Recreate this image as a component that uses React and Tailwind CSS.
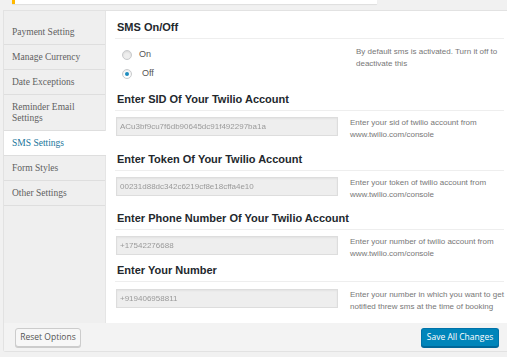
const menu = [
  { label: "Payment Setting" },
  { label: "Manage Currency" },
  { label: "Date Exceptions" },
  { label: "Reminder Email Settings" },
  { label: "SMS Settings", active: true },
  { label: "Form Styles" },
  { label: "Other Settings" },
];

const fields = [
  {
    title: "Enter SID Of Your Twilio Account",
    value: "ACu3bf9cu7f6db90645dc91f492297ba1a",
    help: ["Enter your sid of twilio account from", "www.twilio.com/console"],
    gap: "mt-[9px]",
  },
  {
    title: "Enter Token Of Your Twilio Account",
    value: "00231d88dc342c6219cf8e18cffa4e10",
    help: ["Enter your token of twilio account from", "www.twilio.com/console"],
    gap: "mt-[12px]",
  },
  {
    title: "Enter Phone Number Of Your Twilio Account",
    value: "+17542276688",
    help: ["Enter your number of twilio account from", "www.twilio.com/console"],
    gap: "mt-[11px]",
  },
  {
    title: "Enter Your Number",
    value: "+919406958811",
    help: [
      "Enter your number in which you want to get",
      "notified threw sms at the time of booking",
    ],
    gap: "mt-[4px]",
  },
];

function Heading({ children, className = "" }) {
  return (
    <h3
      className={`border-b border-[#eeeeee] pb-[3px] pl-[2px] text-[11px] font-bold leading-[15px] text-[#23282d] ${className}`}
    >
      {children}
    </h3>
  );
}

function Help({ lines, className = "" }) {
  return (
    <p
      className={`whitespace-nowrap text-[8px] leading-[11.5px] text-[#777777] ${className}`}
    >
      {lines[0]}
      <br />
      {lines[1]}
    </p>
  );
}

function Radio({ checked, label, textGap }) {
  return (
    <label className="flex h-[19px] items-center pl-[7px]">
      <span
        className={`flex h-[10px] w-[10px] items-center justify-center rounded-full border border-[#c8cacc] shadow-[inset_0_1px_2px_rgba(0,0,0,0.1)] ${
          checked ? "bg-white" : "bg-[#eeeeee]"
        }`}
      >
        {checked && <span className="h-[4px] w-[4px] rounded-full bg-[#1e8cbe]" />}
      </span>
      <span className={`${textGap} text-[9px] text-[#555555]`}>{label}</span>
    </label>
  );
}

export default function App() {
  return (
    <div className="h-[357px] w-[507px] overflow-hidden bg-[#f1f1f1] font-['Liberation_Sans',Arial,sans-serif]">
      <div className="ml-[12px] h-[4px] w-[365px] border-l-[3px] border-l-[#ffb900] bg-white shadow-[0_1px_1px_rgba(0,0,0,0.08)]" />

      <div className="ml-[3px] mt-[6px] rounded-bl-[3px] border-b border-l border-t border-[#e2e2e2]">
        <div className="flex">
          <aside className="w-[102px] shrink-0 border-r border-[#e5e5e5] bg-[#efefef] pt-[9px] font-['Liberation_Serif',Georgia,serif]">
            {menu.map((item) => (
              <div
                key={item.label}
                className={`border-b border-[#dedede] pb-[6px] pl-[8px] pr-[10px] pt-[7px] text-[9.5px] leading-[11px] ${
                  item.active
                    ? "-mr-px bg-white text-[#21759b]"
                    : "text-[#5f5f5f]"
                }`}
              >
                {item.label}
              </div>
            ))}
          </aside>

          <main className="flex-1 bg-white pb-[11px] pl-[9px] pr-[4px] pt-[9px]">
            <Heading>SMS On/Off</Heading>
            <div className="mt-[6px] flex">
              <div className="w-[241px]">
                <Radio label="On" textGap="ml-[7px]" />
                <Radio checked label="Off" textGap="ml-[10px]" />
              </div>
              <Help
                className="mt-[1px]"
                lines={["By default sms is activated. Turn it off to", "deactivate this"]}
              />
            </div>

            {fields.map((field, i) => (
              <div key={field.title}>
                <Heading className={field.gap}>{field.title}</Heading>
                <div
                  className={`flex items-start ${
                    i === fields.length - 1 ? "mt-[7px]" : "mt-[6px]"
                  }`}
                >
                  <div className="ml-px flex h-[19px] w-[222px] shrink-0 items-center border border-[#dddddd] bg-[#eeeeee] px-[3px] shadow-[inset_0_1px_2px_rgba(0,0,0,0.05)]">
                    <span className="whitespace-nowrap text-[8px] text-[#9a9a9a] blur-[0.7px]">
                      {field.value}
                    </span>
                  </div>
                  <Help className="ml-[12px]" lines={field.help} />
                </div>
              </div>
            ))}
          </main>
        </div>

        <footer className="flex h-[28px] items-center justify-between bg-[#f3f3f3] pl-[11px] pr-[8px]">
          <button className="h-[19px] w-[66px] rounded-[3px] border border-[#cccccc] bg-[#f7f7f7] font-['Open_Sans',sans-serif] text-[8.5px] text-[#555555] shadow-[0_1px_0_#cccccc]">
            Reset Options
          </button>
          <button className="h-[19px] w-[78px] rounded-[3px] border border-[#0073aa] border-b-[#006799] bg-[#0085ba] font-['Open_Sans',sans-serif] text-[8.5px] text-white shadow-[0_1px_0_#006799]">
            Save All Changes
          </button>
        </footer>
      </div>
    </div>
  );
}
